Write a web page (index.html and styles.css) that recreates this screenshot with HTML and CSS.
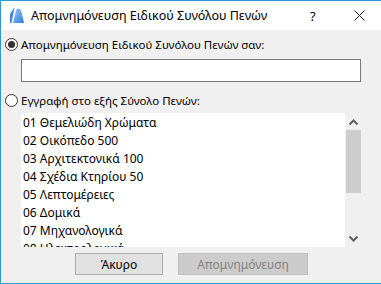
FILE: index.html
```html
<!DOCTYPE html>
<html lang="el">
<head>
    <meta charset="UTF-8">
    <title>Απομνημόνευση Ειδικού Συνόλου Πενών</title>
    <link rel="stylesheet" href="styles.css">
</head>
<body>
    <div class="window">
        <div class="titlebar">
            <svg class="app-icon" width="15" height="15" viewBox="0 0 15 15">
                <defs>
                    <linearGradient id="ic" x1="0" y1="0" x2="1" y2="1">
                        <stop offset="0" stop-color="#9cc8f5"/>
                        <stop offset="1" stop-color="#2f7fe0"/>
                    </linearGradient>
                </defs>
                <path d="M0 15 L0 6 L4 0 L4.5 0 L1.5 15 Z" fill="#3a86e0"/>
                <path d="M3 15 L6 2 Q8 -0.5 10 1 Q12 4 14 15 Z" fill="url(#ic)"/>
            </svg>
            <span class="title">Απομνημόνευση Ειδικού Συνόλου Πενών</span>
            <span class="help">?</span>
            <svg class="close" width="11" height="11" viewBox="0 0 11 11">
                <path d="M0.5 0.5 L10.5 10.5 M10.5 0.5 L0.5 10.5" stroke="#222" stroke-width="1"/>
            </svg>
        </div>

        <div class="content">
            <label class="radio-row first">
                <span class="radio checked"></span>
                <span>Απομνημόνευση Ειδικού Συνόλου Πενών σαν:</span>
            </label>
            <div class="name-input"></div>

            <label class="radio-row second">
                <span class="radio"></span>
                <span>Εγγραφή στο εξής Σύνολο Πενών:</span>
            </label>

            <div class="list-box">
                <ul class="pen-list">
                    <li>01 Θεμελιώδη Χρώματα</li>
                    <li>02 Οικόπεδο 500</li>
                    <li>03 Αρχιτεκτονικά 100</li>
                    <li>04 Σχέδια Κτηρίου 50</li>
                    <li>05 Λεπτομέρειες</li>
                    <li>06 Δομικά</li>
                    <li>07 Μηχανολογικά</li>
                    <li>08 Ηλεκτρολογικά</li>
                </ul>
                <div class="scrollbar">
                    <svg class="arrow" width="9" height="6" viewBox="0 0 9 6">
                        <path d="M0.5 5.5 L4.5 1.5 L8.5 5.5" fill="none" stroke="#606060" stroke-width="2"/>
                    </svg>
                    <div class="thumb"></div>
                    <div class="track"></div>
                    <svg class="arrow" width="9" height="6" viewBox="0 0 9 6">
                        <path d="M0.5 0.5 L4.5 4.5 L8.5 0.5" fill="none" stroke="#606060" stroke-width="2"/>
                    </svg>
                </div>
            </div>

            <div class="buttons">
                <button class="btn">Άκυρο</button>
                <button class="btn disabled">Απομνημόνευση</button>
            </div>
        </div>
    </div>
</body>
</html>
```

FILE: styles.css
```css
body {
    margin: 0;
    font-family: 'Noto Sans', sans-serif;
    font-size: 12px;
    color: #000;
}
.window {
    width: 381px;
    height: 284px;
    box-sizing: border-box;
    border-top: 1px solid #2a9bd0;
    border-left: 1px solid #2a9bd0;
    border-bottom: 1px solid #2a9bd0;
    display: flex;
    flex-direction: column;
    overflow: hidden;
}
.titlebar {
    height: 29px;
    background: white;
    display: flex;
    align-items: center;
    flex-shrink: 0;
}
.app-icon {
    margin-left: 9px;
    margin-right: 6px;
}
.title {
    font-size: 12.5px;
    flex: 1;
}
.help {
    width: 14px;
    font-size: 13px;
    margin-right: 30px;
}
.close {
    margin-right: 16px;
}
.content {
    flex: 1;
    background: #f0f0f0;
    padding-left: 4px;
    display: flex;
    flex-direction: column;
}
.radio-row {
    display: flex;
    align-items: center;
    gap: 3px;
    height: 14px;
    font-size: 11.5px;
}
.radio-row.first {
    margin-top: 7px;
}
.radio-row.second {
    margin-top: 11px;
}
.radio {
    width: 11px;
    height: 11px;
    border: 1px solid #333;
    border-radius: 50%;
    background: white;
    position: relative;
}
.radio.checked::after {
    content: "";
    position: absolute;
    left: 2px;
    top: 2px;
    width: 7px;
    height: 7px;
    border-radius: 50%;
    background: #333;
}
.name-input {
    margin-top: 8px;
    margin-left: 16px;
    width: 338px;
    height: 21px;
    background: white;
    border: 1px solid #7a7a7a;
}
.list-box {
    margin-top: 6px;
    margin-left: 16px;
    height: 134px;
    display: flex;
}
.pen-list {
    list-style: none;
    margin: 0;
    padding: 1px 0 0 2px;
    width: 322px;
    background: white;
    overflow: hidden;
}
.pen-list li {
    height: 18px;
    line-height: 18px;
    white-space: nowrap;
}
.scrollbar {
    width: 16px;
    display: flex;
    flex-direction: column;
    align-items: center;
}
.arrow {
    margin: 6px 0 5px;
}
.thumb {
    width: 15px;
    height: 63px;
    background: #cdcdcd;
}
.track {
    flex: 1;
}
.buttons {
    margin-top: 6px;
    margin-left: 70px;
    display: flex;
    gap: 15px;
}
.btn {
    height: 22px;
    box-sizing: border-box;
    border: 1px solid #adadad;
    background: #e1e1e1;
    font-family: 'Noto Sans', sans-serif;
    font-size: 12px;
    font-weight: normal;
    color: #000;
    padding: 0;
    width: 88px;
}
.btn.disabled {
    width: 130px;
    background: #cccccc;
    border-color: #bfbfbf;
    color: #838383;
}
```
